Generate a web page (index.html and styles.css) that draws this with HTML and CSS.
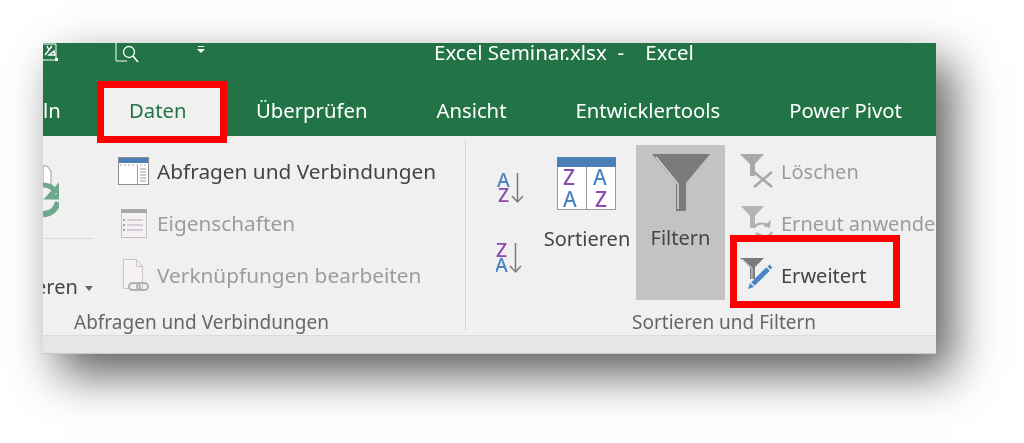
FILE: index.html
```html
<!DOCTYPE html>
<html lang="de">
<head>
    <meta charset="UTF-8">
    <title>Excel Seminar.xlsx - Excel</title>
    <link rel="stylesheet" href="styles.css">
</head>
<body>
    <div class="window">
        <div class="titlebar">
            <svg class="qat-save" width="16" height="19" viewBox="0 0 16 19">
                <path d="M0 1h13v16H0" fill="none" stroke="#fff" stroke-width="1"/>
                <path d="M2 12 9 3M4 3l2 4M6 12l5-4 1 4z" fill="none" stroke="#fff" stroke-width="1.4"/>
                <rect x="12" y="15" width="3" height="3" fill="#fff"/>
            </svg>
            <svg class="qat-preview" width="24" height="20" viewBox="0 0 24 20">
                <path d="M1 0v18h11" fill="none" stroke="#fff" stroke-width="1"/>
                <circle cx="14" cy="9" r="5.5" fill="none" stroke="#fff" stroke-width="1.3"/>
                <path d="m18 13 5 6" stroke="#fff" stroke-width="1.6"/>
            </svg>
            <svg class="qat-more" width="8" height="8" viewBox="0 0 8 8">
                <path d="M1 .5h6" stroke="#fff" stroke-width="1"/>
                <path d="M0 3h8L4 7z" fill="#fff"/>
            </svg>
            <span class="doc-title">Excel Seminar.xlsx&nbsp; -&nbsp;&nbsp;&nbsp; Excel</span>
        </div>

        <div class="tabs">
            <div class="tab tab-cut">ln</div>
            <div class="tab active">Daten<span class="mark mark-tab"></span></div>
            <div class="tab">Überprüfen</div>
            <div class="tab">Ansicht</div>
            <div class="tab">Entwicklertools</div>
            <div class="tab">Power Pivot</div>
        </div>

        <div class="ribbon">
            <div class="group group-queries">
                <div class="group-body">
                    <div class="refresh">
                        <svg class="refresh-icon" width="16" height="55" viewBox="0 0 16 55">
                            <path d="M0 3h4l4 5v14H0z" fill="#fff" stroke="#9a9a9a"/>
                            <path d="M0 22c6 0 9 2 11 5M16 23v11H6z" fill="none" stroke="#6fa98d" stroke-width="5"/>
                            <path d="M0 51c7 0 13-4 15-12" fill="none" stroke="#6fa98d" stroke-width="6"/>
                        </svg>
                        <div class="refresh-label"><span class="refresh-text">eren <span class="caret"></span></span></div>
                    </div>
                    <div class="rows">
                        <div class="row">
                            <svg class="row-icon" width="31" height="28" viewBox="0 0 31 28">
                                <rect x=".5" y=".5" width="30" height="27" fill="#fff" stroke="#8d8d8d"/>
                                <rect x="1" y="1" width="29" height="5" fill="#4a7fb8"/>
                                <path d="M2 8h27" stroke="#aaa" stroke-dasharray="2 2"/>
                                <path d="M19.500 9v18M22 12h6M22 15h6M22 18h6M22 21h6M22 24h6" stroke="#999"/>
                            </svg>
                            <span>Abfragen und Verbindungen</span>
                        </div>
                        <div class="row off">
                            <svg class="row-icon" width="31" height="29" viewBox="0 0 31 29">
                                <rect x="3.500" y=".5" width="25" height="28" fill="#f4f0f4" stroke="#c4c0c4"/>
                                <rect x="3" y="0" width="26" height="4" fill="#a8a8a8"/>
                                <path d="M9 11h16M9 16h16M9 21h16" stroke="#b4aeb4"/>
                                <path d="M5 11h2M5 16h2M5 21h2" stroke="#a9a3a9" stroke-width="2"/>
                            </svg>
                            <span>Eigenschaften</span>
                        </div>
                        <div class="row off">
                            <svg class="row-icon" width="31" height="33" viewBox="0 0 31 33">
                                <path d="M5.500.5h13l6 7v22h-19z" fill="#f5f1f5" stroke="#c8c4c8"/>
                                <path d="M18.500.5v7h6" fill="none" stroke="#c8c4c8"/>
                                <rect x="11" y="24" width="11" height="7" rx="3.500" fill="#f1f1f1" stroke="#b0b0b0" stroke-width="2"/>
                                <rect x="19" y="24" width="11" height="7" rx="3.500" fill="none" stroke="#b0b0b0" stroke-width="2"/>
                            </svg>
                            <span>Verknüpfungen bearbeiten</span>
                        </div>
                    </div>
                </div>
                <div class="group-label">Abfragen und Verbindungen</div>
            </div>

            <div class="group group-sort">
                <div class="group-body">
                    <div class="az-col">
                        <svg width="29" height="32" viewBox="0 0 29 32">
                            <text class="az az-a" x="1" y="15">A</text>
                            <text class="az az-z" x="2" y="30">Z</text>
                            <path d="M21.500 1v28M16 24l5.500 6 5.500-6" fill="none" stroke="#7a7a7a" stroke-width="1.500"/>
                        </svg>
                        <svg width="29" height="32" viewBox="0 0 29 32">
                            <text class="az az-z" x="0" y="15">Z</text>
                            <text class="az az-a" x="-1" y="30">A</text>
                            <path d="M19.500 1v28M14 24l5.500 6 5.500-6" fill="none" stroke="#7a7a7a" stroke-width="1.500"/>
                        </svg>
                    </div>
                    <div class="big-btn btn-sort">
                        <svg width="60" height="54" viewBox="0 0 60 54">
                            <rect x=".5" y=".5" width="58" height="52" fill="#fff" stroke="#9a9a9a"/>
                            <rect x="0" y="0" width="59" height="10" fill="#4a7fb8"/>
                            <path d="M29.500 10v43" stroke="#9a9a9a"/>
                            <text class="az-big az-z" x="6" y="28">Z</text>
                            <text class="az-big az-a" x="6" y="50">A</text>
                            <text class="az-big az-a" x="36" y="28">A</text>
                            <text class="az-big az-z" x="38" y="50">Z</text>
                        </svg>
                        <span>Sortieren</span>
                    </div>
                    <div class="big-btn btn-filter">
                        <svg width="58" height="58" viewBox="0 0 58 58">
                            <path d="M0 0h58L34 29v28H24V29z" fill="#7b7b7b"/>
                            <path d="M4 3 26 30v25" fill="none" stroke="#d8d8d8" stroke-width="1.500"/>
                        </svg>
                        <span>Filtern</span>
                    </div>
                    <div class="rows rows-filter">
                        <div class="row off">
                            <svg class="row-icon" width="34" height="34" viewBox="0 0 34 34">
                                <path d="M0 0h24L15 10v12H10V10z" fill="#a8a8a8"/>
                                <path d="m14 18 18 15M32 18 14 33" stroke="#a8a8a8" stroke-width="2.500"/>
                            </svg>
                            <span>Löschen</span>
                        </div>
                        <div class="row off">
                            <svg class="row-icon" width="34" height="34" viewBox="0 0 34 34">
                                <path d="M1 0h23L15 10v12H10V10z" fill="#b4b4b4"/>
                                <path d="M14 22c2-5 10-6 15-2M32 26c-2 5-10 6-15 2" fill="none" stroke="#b0b0b0" stroke-width="2.200"/>
                                <path d="m31 14-1 8-7-2zM15 33l1-7 7 3z" fill="#b0b0b0"/>
                            </svg>
                            <span>Erneut anwenden</span>
                        </div>
                        <div class="row">
                            <svg class="row-icon" width="34" height="34" viewBox="0 0 34 34">
                                <path d="M0 0h24L15 9v12H10V9z" fill="#7b7b7b"/>
                                <path d="M2 1 12 10v11" fill="none" stroke="#dcdcdc"/>
                                <path d="M13 26 28 11" stroke="#4a86c5" stroke-width="5"/>
                                <path d="M29 10l2-2" stroke="#4a86c5" stroke-width="4"/>
                                <path d="m8 31 2-6 4 4z" fill="#4a86c5"/>
                            </svg>
                            <span>Erweitert</span>
                            <span class="mark mark-row"></span>
                        </div>
                    </div>
                </div>
                <div class="group-label">Sortieren und Filtern</div>
            </div>
        </div>

        <div class="statusbar"></div>
    </div>
</body>
</html>
```

FILE: styles.css
```css
body {
    margin: 0;
    height: 443px;
    overflow: hidden;
    background-color: #fff;
    font-family: "Noto Sans", "Open Sans", sans-serif;
}
.window {
    display: flex;
    flex-direction: column;
    width: 893px;
    height: 311px;
    margin: 43px 0 0 43px;
    overflow: hidden;
    background: #f0f0f0;
    box-shadow: 16px 20px 44px rgba(0, 0, 0, 0.64);
    filter: blur(0.5px);
}
.titlebar {
    display: flex;
    align-items: flex-start;
    height: 37px;
    background: #227447;
    color: #fff;
}
.qat-preview {
    margin-left: 56px;
}
.qat-more {
    margin: 3px 0 0 58px;
}
.doc-title {
    margin-left: 229px;
    font-size: 20.5px;
    line-height: 18px;
    white-space: nowrap;
}
.tabs {
    display: flex;
    height: 56px;
    background: #227447;
    color: #fff;
    font-size: 20.3px;
    line-height: 60px;
}
.tab {
    position: relative;
    padding: 0 34.5px;
    white-space: nowrap;
}
.tab-cut {
    width: 17px;
    padding: 0 37px 0 0;
}
.tab.active {
    margin-top: 1px;
    padding: 0 35px 0 32px;
    line-height: 58px;
    background: #f0f0f0;
    color: #227447;
}
.mark {
    position: absolute;
    box-sizing: border-box;
    border: 7px solid #f00;
}
.mark-tab {
    top: 0;
    left: 0;
    right: -6px;
    height: 62px;
}
.mark-row {
    top: -14px;
    left: -10px;
    width: 170px;
    height: 73px;
}
.ribbon {
    display: flex;
    height: 199px;
    background: #f0f0f0;
    color: #444;
    font-size: 20px;
}
.group {
    display: flex;
    flex-direction: column;
    box-sizing: border-box;
    padding-top: 9px;
}
.group-queries {
    width: 424px;
    flex-shrink: 0;
    border-right: 1px solid transparent;
    background: linear-gradient(#d6d6d6, #d6d6d6) right 4px / 1px 190px no-repeat;
}
.group-sort {
    flex-shrink: 0;
}
.group-body {
    display: flex;
    flex: 1;
}
.group-label {
    height: 33px;
    line-height: 40px;
    font-size: 19px;
    color: #666;
    white-space: nowrap;
}
.group-queries .group-label {
    padding-left: 31px;
}
.group-sort .group-label {
    padding-left: 165px;
}
.refresh {
    width: 51px;
    height: 157px;
    flex-shrink: 0;
}
.refresh-icon {
    display: block;
    margin-top: 18px;
    height: 55px;
}
.refresh-label {
    margin-top: 20px;
    padding-top: 36px;
    border-top: 1px solid #d9d9d9;
    line-height: 24px;
    white-space: nowrap;
}
.refresh-text {
    display: block;
    margin-left: -8px;
}
.caret {
    display: inline-block;
    margin-left: 2px;
    vertical-align: 3px;
    border: 4px solid transparent;
    border-top: 5px solid #666;
    border-bottom: 0;
}
.rows {
    margin-left: 24px;
}
.group-queries .rows {
    font-size: 20.8px;
}
.row {
    position: relative;
    display: flex;
    align-items: center;
    height: 52px;
    white-space: nowrap;
}
.row-icon {
    flex-shrink: 0;
    margin-right: 8px;
}
.off {
    color: #9c9c9c;
}
.az-col {
    display: flex;
    flex-direction: column;
    gap: 38px;
    width: 61px;
    padding: 27px 0 0 29px;
    flex-shrink: 0;
}
.az-col svg {
    display: block;
}
.az {
    font-size: 19.5px;
    font-weight: 500;
}
.az-big {
    font-size: 21px;
    font-weight: 500;
}
.az-a {
    fill: #4a84c0;
}
.az-z {
    fill: #8c4bab;
}
.big-btn {
    display: flex;
    flex-direction: column;
    align-items: center;
    box-sizing: border-box;
    flex-shrink: 0;
    height: 155px;
}
.big-btn span {
    line-height: 28px;
}
.btn-sort {
    width: 88px;
    padding-top: 12px;
    margin-left: -14px;
    margin-right: 5px;
}
.btn-sort span {
    margin-top: 14px;
}
.btn-filter {
    width: 89px;
    padding-top: 9px;
    background: #c3c3c3;
}
.btn-filter span {
    margin-top: 12px;
}
.rows-filter {
    margin-left: 15px;
}
.rows-filter .row-icon {
    margin-right: 7px;
}
.statusbar {
    flex: 1;
    background: #e6e6e6;
    border-top: 1px solid #dcdcdc;
    border-bottom: 1px solid #c8c8c8;
}
```
